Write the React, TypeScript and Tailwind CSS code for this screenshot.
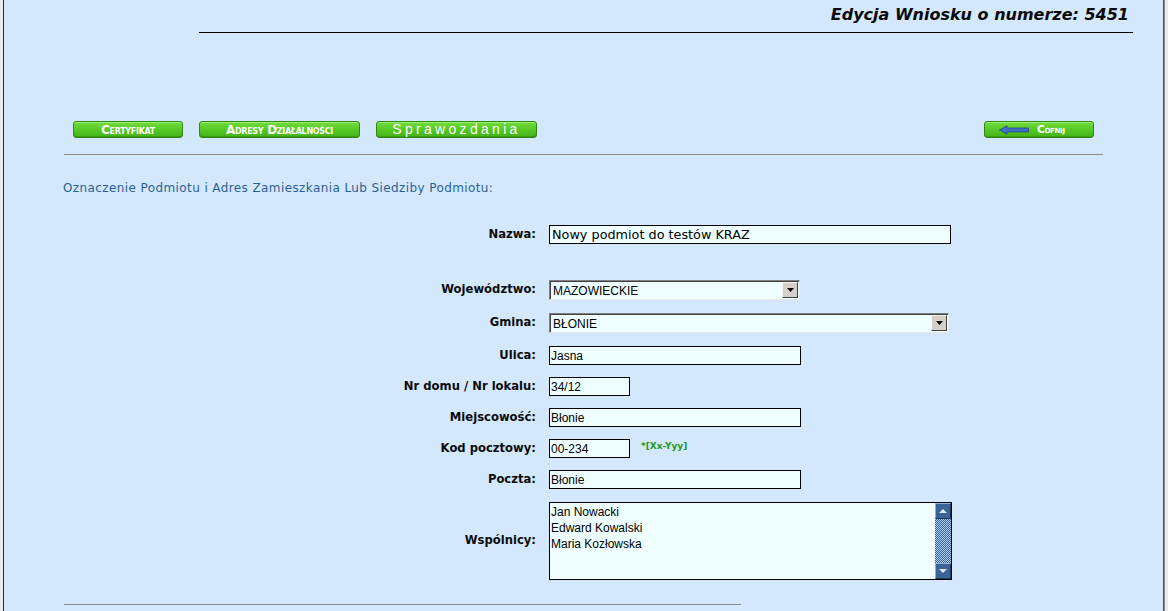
import React from "react";

const GreenButton = ({
  className,
  children,
}: {
  className: string;
  children: React.ReactNode;
}) => (
  <div
    className={
      "relative flex h-[17px] items-center justify-center rounded-[3px] border border-[#2e8a14] bg-gradient-to-b from-[#74dc3e] via-[#56c924] to-[#46b218] shadow-[inset_0_1px_0_#9ef070,inset_0_-1px_0_#3a9a16] " +
      className
    }
  >
    {children}
  </div>
);

const Row = ({
  label,
  mt,
  children,
}: {
  label: string;
  mt: string;
  children: React.ReactNode;
}) => (
  <div className={"flex items-center " + mt}>
    <div className="w-[532px] text-right font-['DejaVu_Sans',sans-serif] text-[11.6px] font-bold text-[#0c0c0c]">
      {label}
    </div>
    <div className="ml-[13px] flex items-center">{children}</div>
  </div>
);

const TextBox = ({ w, value }: { w: string; value: string }) => (
  <div
    className={
      "flex h-[19px] items-end border border-black bg-[#efffff] pb-[0px] pl-[1px] font-['Liberation_Sans',sans-serif] text-[12px] leading-[15px] text-black " +
      w
    }
  >
    {value}
  </div>
);

const SelectBox = ({ w, value }: { w: string; value: string }) => (
  <div
    className={
      "flex h-[20px] items-center border border-t-[#808080] border-l-[#808080] border-r-[#e8e8e8] border-b-[#e8e8e8] bg-[#efffff] shadow-[inset_1px_1px_0_#404040] " +
      w
    }
  >
    <span className="flex-1 pl-[3px] pt-[2px] font-['Liberation_Sans',sans-serif] text-[12px] leading-[14px] text-black">
      {value}
    </span>
    <div className="mr-[1px] flex h-[16px] w-[16px] items-center justify-center border border-t-[#f4f4f4] border-l-[#f4f4f4] border-r-[#404040] border-b-[#404040] bg-[#d4d0c8]">
      <svg width="7" height="4" viewBox="0 0 7 4">
        <path d="M0 0H7L3.5 4Z" fill="#000" />
      </svg>
    </div>
  </div>
);

export default function App() {
  return (
    <div className="flex h-[611px] w-[1168px] overflow-hidden bg-[#e9eef3]">
      <div className="w-[3px] bg-[#e6ebf0]" />
      <div className="w-[1px] bg-[#2a2e33]" />
      <div className="flex flex-1 flex-col bg-[#d3e8fd]">
        {/* header */}
        <div className="ml-[195px] mr-[30px] flex h-[33px] justify-end border-b border-black pr-[4px] pt-[4px]">
          <span className="font-['DejaVu_Sans',sans-serif] text-[16px] font-bold italic leading-[22px] text-[#0a0a0a]">
            Edycja Wniosku o numerze: 5451
          </span>
        </div>

        {/* buttons */}
        <div className="mt-[88px] flex items-center pl-[69px] pr-[69px]">
          <GreenButton className="w-[110px]">
            <span className="font-['DejaVu_Sans',sans-serif] text-[12px] font-bold leading-none tracking-[-0.3px] text-white [font-variant:small-caps]">
              Certyfikat
            </span>
          </GreenButton>
          <GreenButton className="ml-[16px] w-[161px]">
            <span className="font-['DejaVu_Sans',sans-serif] text-[12px] font-bold leading-none tracking-[-0.3px] text-white [font-variant:small-caps]">
              Adresy Działalności
            </span>
          </GreenButton>
          <GreenButton className="ml-[16px] w-[161px]">
            <span className="pb-[2px] font-['Liberation_Sans',sans-serif] text-[14px] leading-none tracking-[3.3px] text-white">
              Sprawozdania
            </span>
          </GreenButton>
          <div className="flex-1" />
          <GreenButton className="w-[110px] justify-start">
            <svg width="30" height="10" viewBox="0 0 30 10" className="ml-[14px]">
              <path
                d="M0.5 5 L8 0.8 L8 3 L29.5 3 L29.5 7 L8 7 L8 9.2 Z"
                fill="#3d6fc4"
                stroke="#24478a"
                strokeWidth="0.8"
              />
            </svg>
            <span className="ml-[8px] font-['DejaVu_Sans',sans-serif] text-[10.5px] font-bold leading-none tracking-[-0.3px] text-white [font-variant:small-caps]">
              Cofnij
            </span>
          </GreenButton>
        </div>

        {/* rule */}
        <div className="ml-[60px] mr-[60px] mt-[16px] h-[1px] bg-[#8c8c8c]" />

        {/* heading */}
        <div className="ml-[59px] mt-[26px] font-['DejaVu_Sans',sans-serif] text-[12px] leading-[14px] tracking-[0.4px] text-[#2b5f96]">
          Oznaczenie Podmiotu i Adres Zamieszkania Lub Siedziby Podmiotu:
        </div>

        {/* form */}
        <Row label="Nazwa:" mt="mt-[30px]">
          <div className="flex h-[19px] w-[402px] items-center border border-black bg-[#efffff] pl-[2px] font-['DejaVu_Sans',sans-serif] text-[12.8px] leading-[15px] text-black">
            Nowy podmiot do testów KRAZ
          </div>
        </Row>
        <Row label="Województwo:" mt="mt-[36px]">
          <SelectBox w="w-[251px]" value="MAZOWIECKIE" />
        </Row>
        <Row label="Gmina:" mt="mt-[13px]">
          <SelectBox w="w-[400px]" value="BŁONIE" />
        </Row>
        <Row label="Ulica:" mt="mt-[13px]">
          <TextBox w="w-[252px]" value="Jasna" />
        </Row>
        <Row label="Nr domu / Nr lokalu:" mt="mt-[12px]">
          <TextBox w="w-[81px]" value="34/12" />
        </Row>
        <Row label="Miejscowość:" mt="mt-[12px]">
          <TextBox w="w-[252px]" value="Błonie" />
        </Row>
        <Row label="Kod pocztowy:" mt="mt-[12px]">
          <TextBox w="w-[81px]" value="00-234" />
          <span className="ml-[11px] -mt-[5px] font-['DejaVu_Sans',sans-serif] text-[9px] font-bold leading-none text-[#1e9a1e]">
            *[Xx-Yyy]
          </span>
        </Row>
        <Row label="Poczta:" mt="mt-[12px]">
          <TextBox w="w-[252px]" value="Błonie" />
        </Row>
        <Row label="Wspólnicy:" mt="mt-[13px]">
          <div className="flex h-[78px] w-[403px] border border-black bg-[#efffff]">
            <div className="flex-1 pl-[1px] pt-[1px] font-['Liberation_Sans',sans-serif] text-[12px] leading-[16px] text-black">
              <div>Jan Nowacki</div>
              <div>Edward Kowalski</div>
              <div>Maria Kozłowska</div>
            </div>
            <div className="flex w-[16px] flex-col bg-[#1a2a44]">
              <div className="flex h-[16px] items-center justify-center border border-t-[#8fb0d8] border-l-[#8fb0d8] border-r-[#1d3556] border-b-[#1d3556] bg-[#3a6596]">
                <svg width="8" height="5" viewBox="0 0 8 5">
                  <path d="M0 4H8L4 0Z" fill="#dbe8f6" />
                </svg>
              </div>
              <div className="flex-1 bg-[repeating-conic-gradient(#3f6c9e_0%_25%,#a9c6e6_0%_50%)] bg-[length:2px_2px]" />
              <div className="flex h-[16px] items-center justify-center border border-t-[#8fb0d8] border-l-[#8fb0d8] border-r-[#1d3556] border-b-[#1d3556] bg-[#3a6596]">
                <svg width="8" height="5" viewBox="0 0 8 5">
                  <path d="M0 0H8L4 4Z" fill="#dbe8f6" />
                </svg>
              </div>
            </div>
          </div>
        </Row>

        {/* bottom rule */}
        <div className="ml-[60px] mt-[24px] h-[1px] w-[677px] bg-[#8c8c8c]" />
      </div>
      <div className="w-[1px] bg-[#4a4e52]" />
      <div className="w-[1px] bg-[#8a8e92]" />
      <div className="w-[3px] bg-[#e6ebf0]" />
    </div>
  );
}
